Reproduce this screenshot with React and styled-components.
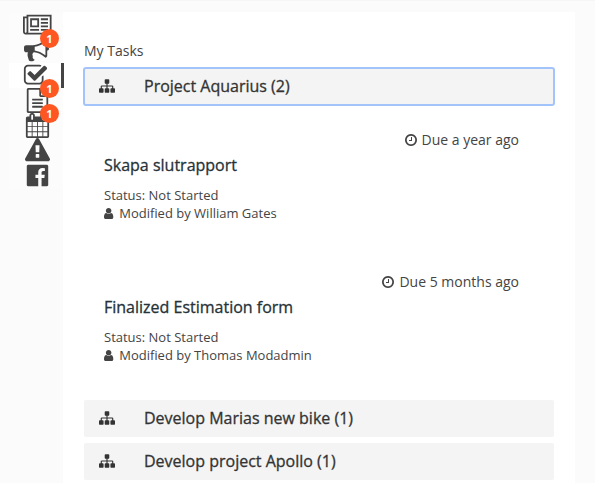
import React from "react";
import styled, { createGlobalStyle } from "styled-components";

const Global = createGlobalStyle`
  * { box-sizing: border-box; }
  body {
    margin: 0;
    background: #fbfbfb;
    color: #444;
    font-family: "Open Sans", sans-serif;
    overflow: hidden;
  }
`;

const icons = {
  news: [2048, "M1024 512h-384v384h384v-384zm128 640v128h-640v-128h640zm0-768v640h-640v-640h640zm640 768v128h-512v-128h512zm0-256v128h-512v-128h512zm0-256v128h-512v-128h512zm0-256v128h-512v-128h512zm-1536 960v-960h-128v960q0 26 19 45t45 19 45-19 19-45zm1664 0v-1088h-1536v1088q0 33-11 64h1483q26 0 45-19t19-45zm128-1216v1216q0 80-56 136t-136 56h-1664q-80 0-136-56t-56-136v-1088h256v-128h1792z"],
  bullhorn: [1792, "M1664 640q53 0 90.5 37.5t37.5 90.5-37.5 90.5-90.5 37.5v384q0 52-38 90t-90 38q-417-347-812-380-58 19-91 66t-31 100.5 40 92.5q-20 33-23 65.5t6 58 33.5 55 48 50 61.5 50.5q-29 58-111.5 83t-168.5 11.5-132-55.5q-7-23-29.5-87.5t-32-94.5-23-89-15-101 3.5-98.5 22-110.5h-122q-66 0-113-47t-47-113v-192q0-66 47-113t113-47h480q435 0 896-384 52 0 90 38t38 90v384zm-128 604v-954q-394 302-768 343v270q377 42 768 341z"],
  check: [1792, "M1472 930v318q0 119-84.5 203.5t-203.5 84.5h-832q-119 0-203.5-84.5t-84.5-203.5v-832q0-119 84.5-203.5t203.5-84.5h832q63 0 117 25 15 7 18 23 3 17-9 29l-49 49q-10 10-23 10-3 0-9-2-23-6-45-6h-832q-66 0-113 47t-47 113v832q0 66 47 113t113 47h832q66 0 113-47t47-113v-254q0-13 9-22l64-64q10-10 23-10 6 0 12 3 20 8 20 29zm231-489l-814 814q-24 24-57 24t-57-24l-430-430q-24-24-24-57t24-57l110-110q24-24 57-24t57 24l263 263 647-647q24-24 57-24t57 24l110 110q24 24 24 57t-24 57z"],
  file: [1792, "M1596 380q28 28 48 76t20 88v1152q0 40-28 68t-68 28h-1344q-40 0-68-28t-28-68v-1600q0-40 28-68t68-28h896q40 0 88 20t76 48zm-444-244v376h376q-10-29-22-41l-313-313q-12-12-41-22zm384 1528v-1024h-416q-40 0-68-28t-28-68v-416h-768v1536h1280zm-1024-864q0-14 9-23t23-9h704q14 0 23 9t9 23v64q0 14-9 23t-23 9h-704q-14 0-23-9t-9-23v-64zm736 224q14 0 23 9t9 23v64q0 14-9 23t-23 9h-704q-14 0-23-9t-9-23v-64q0-14 9-23t23-9h704zm0 256q14 0 23 9t9 23v64q0 14-9 23t-23 9h-704q-14 0-23-9t-9-23v-64q0-14 9-23t23-9h704z"],
  calendar: [1792, "M192 1664h288v-288h-288v288zm352 0h320v-288h-320v288zm-352-352h288v-320h-288v320zm352 0h320v-320h-320v320zm-352-384h288v-288h-288v288zm736 736h320v-288h-320v288zm-384-736h320v-288h-320v288zm768 736h288v-288h-288v288zm-384-352h320v-320h-320v320zm-352-864v-288q0-13-9.5-22.5t-22.5-9.5h-64q-13 0-22.5 9.5t-9.5 22.5v288q0 13 9.5 22.5t22.5 9.5h64q13 0 22.5-9.5t9.5-22.5zm736 864h288v-320h-288v320zm-384-384h320v-288h-320v288zm384 0h288v-288h-288v288zm32-480v-288q0-13-9.5-22.5t-22.5-9.5h-64q-13 0-22.5 9.5t-9.5 22.5v288q0 13 9.5 22.5t22.5 9.5h64q13 0 22.5-9.5t9.5-22.5zm384-64v1280q0 52-38 90t-90 38h-1408q-52 0-90-38t-38-90v-1280q0-52 38-90t90-38h128v-96q0-66 47-113t113-47h64q66 0 113 47t47 113v96h384v-96q0-66 47-113t113-47h64q66 0 113 47t47 113v96h128q52 0 90 38t38 90z"],
  warning: [1792, "M1024 1375v-190q0-14-9.5-23.5t-22.5-9.5h-192q-13 0-22.5 9.5t-9.5 23.5v190q0 14 9.5 23.5t22.5 9.5h192q13 0 22.5-9.5t9.5-23.5zm-2-374l18-459q0-12-10-19-13-11-24-11h-220q-11 0-24 11-10 7-10 21l17 457q0 10 10 16.5t24 6.5h185q14 0 23.5-6.5t10.5-16.5zm-14-934l768 1408q35 63-2 126-17 29-46.5 46t-63.5 17h-1536q-34 0-63.5-17t-46.5-46q-37-63-2-126l768-1408q17-31 47-49t65-18 65 18 47 49z"],
  facebook: [1792, "M1579 128q35 0 60 25t25 60v1366q0 35-25 60t-60 25h-391v-595h199l30-232h-229v-148q0-56 23.5-84t91.5-28l122-1v-207q-63-9-178-9-136 0-217.5 80t-81.5 226v171h-200v232h200v595h-735q-35 0-60-25t-25-60v-1366q0-35 25-60t60-25h1366z"],
  sitemap: [1792, "M1792 1248v320q0 40-28 68t-68 28h-320q-40 0-68-28t-28-68v-320q0-40 28-68t68-28h96v-192h-512v192h96q40 0 68 28t28 68v320q0 40-28 68t-68 28h-320q-40 0-68-28t-28-68v-320q0-40 28-68t68-28h96v-192h-512v192h96q40 0 68 28t28 68v320q0 40-28 68t-68 28h-320q-40 0-68-28t-28-68v-320q0-40 28-68t68-28h96v-192q0-52 38-90t90-38h512v-192h-96q-40 0-68-28t-28-68v-320q0-40 28-68t68-28h320q40 0 68 28t28 68v320q0 40-28 68t-68 28h-96v192h512q52 0 90 38t38 90v192h96q40 0 68 28t28 68z"],
  clock: [1536, "M896 544v448q0 14-9 23t-23 9h-320q-14 0-23-9t-9-23v-64q0-14 9-23t23-9h224v-352q0-14 9-23t23-9h64q14 0 23 9t9 23zm416 352q0-148-73-273t-198-198-273-73-273 73-198 198-73 273 73 273 198 198 273 73 273-73 198-198 73-273zm224 0q0 209-103 385.5t-279.5 279.5-385.5 103-385.5-103-279.5-279.5-103-385.5 103-385.5 279.5-279.5 385.5-103 385.5 103 279.5 279.5 103 385.5z"],
  user: [1408, "M1280 1399q0 109-62.5 187t-150.5 78h-854q-88 0-150.5-78t-62.5-187q0-85 8.5-160.5t31.5-152 58.5-131 94-89 134.5-34.5q131 128 313 128t313-128q76 0 134.5 34.5t94 89 58.5 131 31.5 152 8.5 160.5zm-256-887q0 159-112.5 271.5t-271.5 112.5-271.5-112.5-112.5-271.5 112.5-271.5 271.5-112.5 271.5 112.5 112.5 271.5z"],
};

const Svg = styled.svg`
  display: block;
  flex: none;
  fill: currentColor;
`;

function Icon({ name, size }) {
  const [w, d] = icons[name];
  return (
    <Svg width={(size * w) / 1792} height={size} viewBox={`0 0 ${w} 1792`}>
      <path d={d} />
    </Svg>
  );
}

const Page = styled.div`
  display: flex;
  height: 483px;
  padding: 12px 20px 0 9px;
  border-top: 1px solid #f6f6f6;
`;

const Sidebar = styled.nav`
  flex: none;
  width: 54px;
  height: 176px;
  background: #fcfcfc;
`;

const NavItem = styled.div`
  position: relative;
  display: flex;
  width: ${(p) => (p.$active ? 55 : 54)}px;
  height: 25px;
  padding-left: ${(p) => p.$indent}px;
  background: ${(p) => (p.$active ? "#fff" : "transparent")};
  border-right: ${(p) => (p.$active ? "3px solid #444" : "0")};
`;

const Badge = styled.span`
  position: absolute;
  left: 31px;
  top: -9px;
  z-index: 1;
  width: 19px;
  height: 19px;
  border-radius: 50%;
  background: #ff5722;
  color: #fff;
  font-size: 11px;
  font-weight: 700;
  line-height: 19px;
  text-align: center;
`;

const Panel = styled.main`
  flex: 1;
  margin-top: -1px;
  padding: 29px 21px 0;
  background: #fff;
`;

const Title = styled.div`
  height: 27px;
  font-size: 14px;
  line-height: 20px;
`;

const Project = styled.button`
  display: flex;
  align-items: center;
  width: 470px;
  height: 37px;
  margin: 0 0 6px;
  padding: 0 15px 1px;
  gap: 29px;
  border: 0;
  border-radius: 2px;
  background: #f4f4f4;
  color: #333;
  font: 400 16px/22px "Open Sans", sans-serif;
  -webkit-text-stroke: 0.3px currentColor;
  outline: ${(p) => (p.$focused ? "2px solid #a3c4fb" : "none")};
  outline-offset: -1px;

  svg { stroke: none; }
`;

const Task = styled.article`
  height: 142px;
  padding: 19px 35px 0 20px;
`;

const Due = styled.div`
  display: flex;
  align-items: center;
  justify-content: flex-end;
  gap: 5px;
  height: 20px;
  font-size: 14px;
  line-height: 20px;
`;

const TaskName = styled.h3`
  margin: 4px 0 10px;
  height: 22px;
  color: #263238;
  font-size: 16px;
  font-weight: 400;
  line-height: 22px;
  -webkit-text-stroke: 0.3px currentColor;
`;

const Meta = styled.div`
  display: flex;
  align-items: center;
  gap: 5px;
  height: 18px;
  font-size: 13px;
  line-height: 18px;
`;

const Tasks = styled.section`
  height: 289px;
`;

const nav = [
  { icon: "news", indent: 14 },
  { icon: "bullhorn", indent: 15, badge: 1 },
  { icon: "check", indent: 14, active: true },
  { icon: "file", indent: 15.5, badge: 1 },
  { icon: "calendar", indent: 15.5, badge: 1 },
  { icon: "warning", indent: 15.5 },
  { icon: "facebook", indent: 15.5 },
];

const tasks = [
  { name: "Skapa slutrapport", due: "Due a year ago", by: "William Gates" },
  { name: "Finalized Estimation form", due: "Due 5 months ago", by: "Thomas Modadmin" },
];

function ProjectRow({ label, focused }) {
  return (
    <Project $focused={focused}>
      <Icon name="sitemap" size={16} />
      <span>{label}</span>
    </Project>
  );
}

export default function App() {
  return (
    <>
      <Global />
      <Page>
        <Sidebar>
          {nav.map((n) => (
            <NavItem key={n.icon} $indent={n.indent} $active={n.active}>
              <Icon name={n.icon} size={25} />
              {n.badge && <Badge>{n.badge}</Badge>}
            </NavItem>
          ))}
        </Sidebar>
        <Panel>
          <Title>My Tasks</Title>
          <ProjectRow label="Project Aquarius (2)" focused />
          <Tasks>
            {tasks.map((t) => (
              <Task key={t.name}>
                <Due>
                  <Icon name="clock" size={14} />
                  {t.due}
                </Due>
                <TaskName>{t.name}</TaskName>
                <Meta>Status: Not Started</Meta>
                <Meta>
                  <Icon name="user" size={13} />
                  Modified by {t.by}
                </Meta>
              </Task>
            ))}
          </Tasks>
          <ProjectRow label="Develop Marias new bike (1)" />
          <ProjectRow label="Develop project Apollo (1)" />
        </Panel>
      </Page>
    </>
  );
}
